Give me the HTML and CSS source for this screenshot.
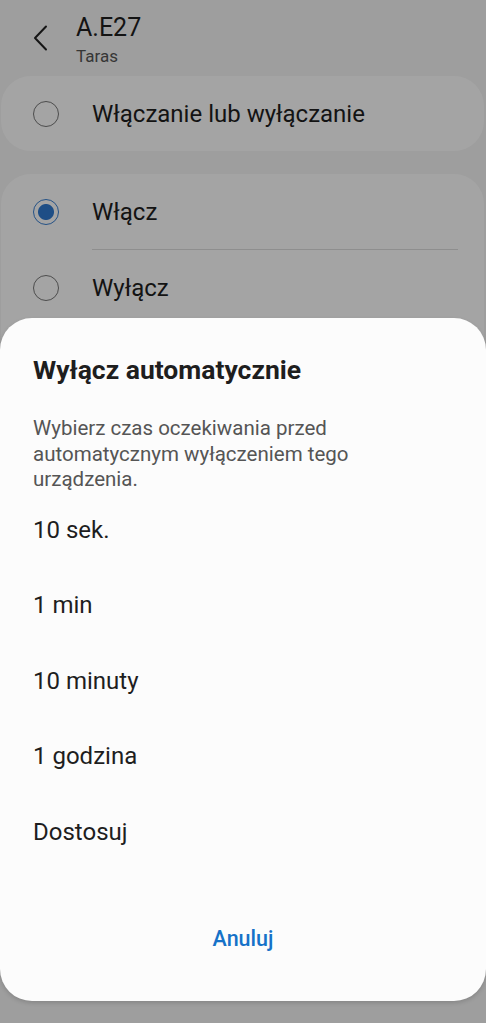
FILE: index.html
```html
<!DOCTYPE html>
<html lang="pl">
<head>
    <meta charset="UTF-8">
    <meta name="viewport" content="width=device-width, initial-scale=1.0">
    <title>A.E27</title>
    <link rel="stylesheet" href="styles.css">
</head>
<body>
    <div class="screen">
        <header class="topbar">
            <button class="back" aria-label="Wstecz">
                <svg width="16" height="26" viewBox="0 0 16 26">
                    <path d="M14 1.5 L3 13 L14 24.5" fill="none" stroke="#222" stroke-width="2" stroke-linecap="round" stroke-linejoin="round"/>
                </svg>
            </button>
            <div class="titles">
                <div class="device">A.E27</div>
                <div class="room">Taras</div>
            </div>
        </header>

        <div class="card">
            <label class="row">
                <span class="radio"></span>
                <span class="label">Włączanie lub wyłączanie</span>
            </label>
        </div>

        <div class="card">
            <label class="row">
                <span class="radio checked"></span>
                <span class="label">Włącz</span>
            </label>
            <div class="divider"></div>
            <label class="row">
                <span class="radio"></span>
                <span class="label">Wyłącz</span>
            </label>
            <div class="row spacer"></div>
        </div>

        <div class="scrim"></div>

        <div class="dialog">
            <h2 class="dialog-title">Wyłącz automatycznie</h2>
            <p class="dialog-text">Wybierz czas oczekiwania przed automatycznym wyłączeniem tego urządzenia.</p>
            <ul class="options">
                <li>10 sek.</li>
                <li>1 min</li>
                <li>10 minuty</li>
                <li>1 godzina</li>
                <li>Dostosuj</li>
            </ul>
            <div class="actions">
                <button class="text-button">Anuluj</button>
            </div>
        </div>
    </div>
</body>
</html>
```

FILE: styles.css
```css
body {
    margin: 0;
    font-family: Roboto, "Noto Sans", sans-serif;
    background: #f6f6f6;
}
.screen {
    position: relative;
    width: 486px;
    height: 1023px;
    overflow: hidden;
    background: #f6f6f6;
}
.topbar {
    display: flex;
    align-items: flex-start;
    height: 76px;
    padding: 0 0 0 32px;
    box-sizing: border-box;
}
.back {
    border: none;
    background: none;
    padding: 0;
    margin-top: 25px;
    width: 44px;
    text-align: left;
}
.titles {
    padding-top: 11.5px;
}
.device {
    font-size: 25px;
    color: #1e1e1e;
    line-height: 32px;
}
.room {
    margin-top: 1.5px;
    font-size: 17px;
    color: #555;
    line-height: 22px;
}
.card {
    background: #fff;
    border-radius: 30px;
    margin: 0 2px 23px 1px;
    overflow: hidden;
}
.row {
    display: flex;
    align-items: center;
    height: 75px;
    padding-left: 32px;
}
.row.spacer {
    height: 40px;
}
.radio {
    width: 26px;
    height: 26px;
    border: 1.5px solid #777;
    border-radius: 50%;
    box-sizing: border-box;
    margin-right: 33px;
    flex-shrink: 0;
}
.radio.checked {
    border: 1.5px solid #3a7fd0;
    background: radial-gradient(circle, #2f7ad0 0 7.5px, transparent 8.5px);
}
.label {
    font-size: 24px;
    color: #1e1e1e;
}
.divider {
    height: 1px;
    background: #ddd;
    margin: 0 26px 0 91px;
}
.scrim {
    position: absolute;
    inset: 0;
    background: rgba(0, 0, 0, 0.355);
}
.dialog {
    position: absolute;
    left: 0;
    right: 0;
    top: 318px;
    height: 683px;
    background: #fcfcfc;
    border-radius: 32px;
    padding: 0 33px;
    box-sizing: border-box;
    box-shadow: 0 2px 4px rgba(0, 0, 0, 0.15);
}
.dialog-title {
    margin: 36px 0 0;
    font-size: 26.5px;
    font-weight: 700;
    color: #1e1e1e;
    line-height: 32px;
}
.dialog-text {
    margin: 30px 0 0;
    font-size: 20.5px;
    line-height: 25.5px;
    color: #555;
}
.options {
    list-style: none;
    margin: 0;
    padding: 0;
}
.options li {
    height: 75.5px;
    line-height: 75.5px;
    font-size: 24px;
    color: #1e1e1e;
}
.actions {
    display: flex;
    justify-content: center;
    margin-top: 56px;
}
.text-button {
    border: none;
    background: none;
    font-family: inherit;
    font-size: 21.5px;
    line-height: 25px;
    font-weight: 500;
    color: #1672c8;
    padding: 0;
}
```
